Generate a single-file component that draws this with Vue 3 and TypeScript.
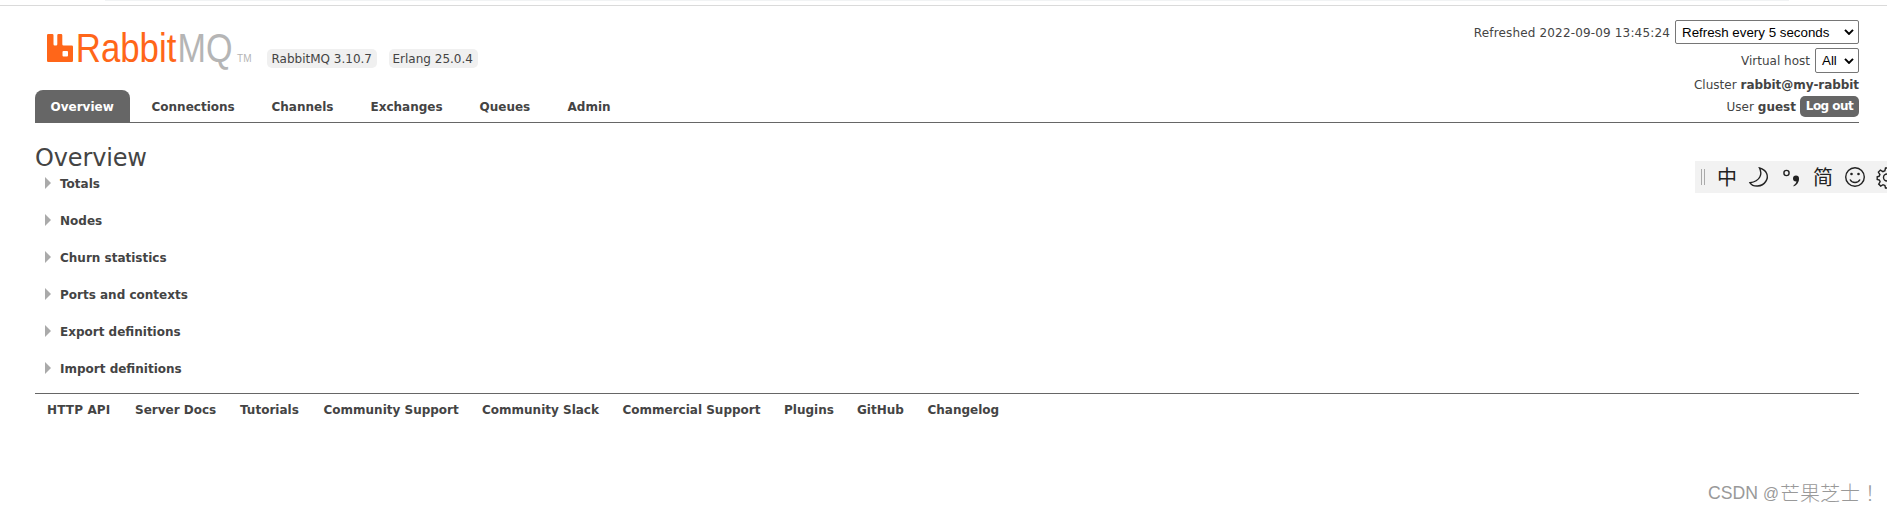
<script setup lang="ts">
interface Item {
  label: string
  width: number
}

const tabs: Item[] = [
  { label: 'Overview', width: 95 },
  { label: 'Connections', width: 115 },
  { label: 'Channels', width: 94 },
  { label: 'Exchanges', width: 104 },
  { label: 'Queues', width: 83 },
  { label: 'Admin', width: 75 },
]

const sections: string[] = [
  'Totals',
  'Nodes',
  'Churn statistics',
  'Ports and contexts',
  'Export definitions',
  'Import definitions',
]

const links: Item[] = [
  { label: 'HTTP API', width: 88 },
  { label: 'Server Docs', width: 105 },
  { label: 'Tutorials', width: 83.5 },
  { label: 'Community Support', width: 158.5 },
  { label: 'Community Slack', width: 140.5 },
  { label: 'Commercial Support', width: 161.5 },
  { label: 'Plugins', width: 73 },
  { label: 'GitHub', width: 70.5 },
  { label: 'Changelog', width: 72 },
]
</script>

<template>
  <div class="page">
    <div class="browser-edge"><div class="address"></div></div>
    <header class="header">
      <div class="brand">
        <svg class="logo" width="210" height="56" viewBox="0 -10 210 56">
          <path
            fill="#ff6619"
            d="M1.200 6h4.100q1.200 0 1.200 1.200v9.100q0 1.200 1.200 1.200h1.400q1.200 0 1.200-1.200V7.200q0-1.200 1.200-1.200h2.600q1.200 0 1.200 1.200v9.100q0 1.200 1.200 1.200h8.300q1.200 0 1.200 1.200v14.100q0 1.200-1.200 1.200H1.200Q0 34 0 32.800V7.200Q0 6 1.200 6zM16.500 23q-1 0-1 1v3.500q0 1 1 1H20q1 0 1-1V24q0-1-1-1z"
          />
          <text class="logo-text rabbit" x="28.800" y="34" textLength="100.500" lengthAdjust="spacingAndGlyphs">Rabbit</text>
          <text class="logo-text mq" x="130.500" y="34" textLength="55" lengthAdjust="spacingAndGlyphs">MQ</text>
          <text class="trademark" x="190" y="34" textLength="14.500" lengthAdjust="spacingAndGlyphs">TM</text>
        </svg>
        <span class="version first">RabbitMQ 3.10.7</span>
        <span class="version second">Erlang 25.0.4</span>
      </div>
      <nav class="tabs">
        <a v-for="(tab, i) in tabs" :key="tab.label" class="tab" :class="{ selected: i === 0 }" :style="{ width: tab.width + 'px' }">{{ tab.label }}</a>
      </nav>
      <div class="status">
        <div class="row refresh">
          <span class="refreshed">Refreshed 2022-09-09 13:45:24</span>
          <span class="select interval">Refresh every 5 seconds
            <svg width="10" height="6" viewBox="0 0 10 6"><path d="M1 .9l4 4 4-4" /></svg>
          </span>
        </div>
        <div class="row vhost">
          <span>Virtual host</span>
          <span class="select all">All
            <svg width="10" height="6" viewBox="0 0 10 6"><path d="M1 .9l4 4 4-4" /></svg>
          </span>
        </div>
        <div class="row cluster"><span>Cluster</span><b>rabbit@my-rabbit</b></div>
        <div class="row user"><span>User</span><b>guest</b><button class="logout">Log out</button></div>
      </div>
    </header>

    <main class="main">
      <h1>Overview</h1>
      <div v-for="section in sections" :key="section" class="section">
        <svg class="arrow" width="6" height="12" viewBox="0 0 6 12"><path d="M0 0l6 6-6 6z" /></svg>
        <h2>{{ section }}</h2>
      </div>
    </main>

    <footer class="footer">
      <a v-for="link in links" :key="link.label" :style="{ width: link.width + 'px' }">{{ link.label }}</a>
    </footer>

    <div class="ime">
      <svg width="192" height="32" viewBox="0 0 192 32">
        <path class="grip" d="M6.500 8v16M9.500 8v16" />
        <text x="22" y="24" font-size="20">中</text>
        <path class="stroke" d="M64.500 7c3 6 1 13-9.500 14.800c3 4.500 12 4.500 15.700-1.300c3.600-5.500 1-11.500-6.200-13.500z" />
        <circle class="stroke" cx="91.500" cy="12" r="2.600" />
        <circle cx="101" cy="17.600" r="3" />
        <path d="M104 17.500c0 4-2 6.500-5.500 8v-1c2-1.500 3-3 3-5z" />
        <text x="118" y="24" font-size="20">简</text>
        <circle class="stroke" cx="160" cy="16" r="9.300" />
        <circle cx="156.500" cy="13" r="1.300" />
        <circle cx="163.500" cy="13" r="1.300" />
        <path class="stroke" d="M155 18.500c2 4 8 4 10 0" />
        <path class="stroke" d="M193 7h-2.500l-.6 2.700-2 .9-2.500-1.500-2 2 1.500 2.500-.8 1.700-1.900.5v2.700l2.200.6.700 1.700-1.400 2.300 2 2 2.300-1.400 1.900.8.600 2.500h2.500" />
        <circle class="stroke" cx="192" cy="16.500" r="3.500" />
      </svg>
    </div>
    <svg class="watermark" width="179" height="33" viewBox="0 0 179 33">
      <text x="0" y="20.500" font-size="18.500" textLength="50" lengthAdjust="spacingAndGlyphs">CSDN</text>
      <text x="55" y="20.500" font-size="17" textLength="16" lengthAdjust="spacingAndGlyphs">@</text>
      <text class="cjk" x="72" y="22.500" font-size="20">芒果芝士！</text>
    </svg>
  </div>
</template>

<style>
body {
  margin: 0;
  background: #fff;
}
</style>

<style scoped>
.page {
  position: relative;
  box-sizing: border-box;
  width: 1887px;
  height: 511px;
  overflow: hidden;
  background: #fff;
  color: #444;
  font: 12px/18px Verdana, "DejaVu Sans", sans-serif;
  white-space: nowrap;
}
.browser-edge {
  height: 5px;
  border-bottom: 1px solid #dadada;
}
.address {
  width: 1684px;
  height: 1px;
  margin-left: 105px;
  background: #f1f3f4;
}
.header {
  display: grid;
  grid-template-columns: 1fr 400px;
  grid-template-rows: 84px 32px;
  margin: 0 28px 0 35px;
  border-bottom: 1px solid #666;
}
.brand {
  display: flex;
  align-items: flex-start;
  padding: 12px 0 0 12px;
}
.logo {
  flex: none;
}
.logo-text {
  font: 40.500px "Liberation Sans", Arial, sans-serif;
}
.rabbit {
  fill: #ff6619;
}
.mq {
  fill: #b5b5b5;
}
.trademark {
  fill: #b5b5b5;
  font: 10px "Liberation Sans", Arial, sans-serif;
}
.version {
  box-sizing: border-box;
  height: 19px;
  margin-top: 31px;
  padding-left: 4.500px;
  border-radius: 5px;
  background: #f0f0f0;
  line-height: 20px;
}
.first {
  width: 110px;
  margin-left: 10px;
}
.second {
  width: 89px;
  margin-left: 12px;
  padding-left: 3.500px;
}
.tabs {
  display: flex;
  grid-row: 2;
  gap: 5px;
}
.tab {
  box-sizing: border-box;
  height: 32px;
  padding-left: 16.500px;
  border-radius: 8px 8px 0 0;
  font-weight: bold;
  line-height: 34px;
}
.selected {
  padding-left: 15.500px;
  background: #666;
  color: #fff;
}
.status {
  display: flex;
  flex-direction: column;
  grid-area: 1 / 2 / 3 / 3;
  align-items: flex-end;
  padding-top: 14px;
}
.row {
  display: flex;
  align-items: center;
  gap: 4px;
}
.refreshed {
  padding-top: 1px;
  letter-spacing: 0.160px;
}
.select {
  display: flex;
  box-sizing: border-box;
  align-items: center;
  justify-content: space-between;
  padding: 0 4px 0 6px;
  border: 1px solid #767676;
  border-radius: 2px;
  color: #000;
  font: 13.333px "Liberation Sans", Arial, sans-serif;
}
.select path {
  fill: none;
  stroke: #000;
  stroke-width: 2;
}
.interval {
  width: 184px;
  height: 24px;
}
.all {
  width: 44px;
  height: 25px;
}
.refresh {
  height: 24px;
  gap: 5px;
}
.vhost {
  height: 25px;
  margin-top: 4px;
  gap: 5px;
}
.cluster {
  height: 24px;
}
.cluster b {
  letter-spacing: -0.060px;
}
.user {
  height: 21px;
  margin-top: -1px;
}
.logout {
  width: 59px;
  height: 21px;
  padding: 0;
  border: 0;
  border-radius: 5px;
  background: #666;
  color: #fff;
  font: bold 12px/21px Verdana, "DejaVu Sans", sans-serif;
  letter-spacing: -0.550px;
}
.main {
  height: 270px;
  margin-left: 35px;
}
h1 {
  height: 30px;
  margin: 0;
  padding-top: 21px;
  font-size: 24px;
  font-weight: normal;
  letter-spacing: -0.150px;
  line-height: 28px;
}
.section {
  display: flex;
  height: 37px;
  padding-left: 10px;
}
.arrow {
  flex: none;
  margin-top: 3px;
  fill: #aaa;
}
h2 {
  margin: 1px 0 0 9px;
  font-size: 12px;
  line-height: 18px;
}
.footer {
  display: flex;
  margin: 0 28px 0 35px;
  padding: 7px 0 0 12px;
  border-top: 1px solid #666;
  font-weight: bold;
}
.footer a:first-child {
  letter-spacing: 0.150px;
}
.ime {
  position: absolute;
  top: 161px;
  left: 1695px;
  width: 192px;
  height: 32px;
  background: #f2f2f2;
}
.ime svg {
  display: block;
  fill: #222;
  font-family: "Noto Sans CJK SC", sans-serif;
}
.ime .stroke {
  fill: none;
  stroke: #222;
  stroke-width: 1.400;
}
.ime .grip {
  stroke: #aaa;
}
.watermark {
  position: absolute;
  top: 478px;
  left: 1708px;
  fill: #999;
  font-family: "Liberation Sans", Arial, sans-serif;
}
.cjk {
  font-family: "Noto Sans CJK TC", sans-serif;
  font-weight: 300;
}
</style>
